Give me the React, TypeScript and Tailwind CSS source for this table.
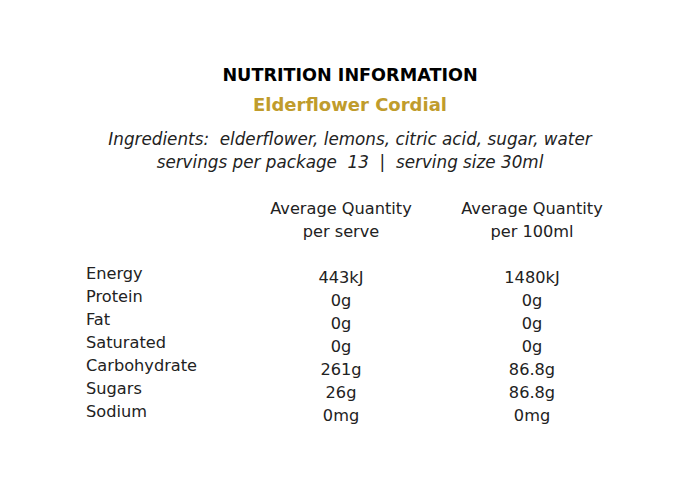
import React from "react";

const rows: [string, string, string][] = [
  ["Energy", "443kJ", "1480kJ"],
  ["Protein", "0g", "0g"],
  ["Fat", "0g", "0g"],
  ["Saturated", "0g", "0g"],
  ["Carbohydrate", "261g", "86.8g"],
  ["Sugars", "26g", "86.8g"],
  ["Sodium", "0mg", "0mg"],
];

export default function App() {
  return (
    <div
      className="w-[700px] h-[500px] bg-white text-[#222] flex flex-col"
      style={{ fontFamily: '"DejaVu Sans", sans-serif' }}
    >
      <div className="pt-[64px] flex flex-col items-center">
        <div className="text-[17.6px] leading-[23px] font-bold text-black">NUTRITION INFORMATION</div>
        <div className="text-[18px] leading-[23px] font-bold text-[#c09c2c] mt-[6px]">Elderflower Cordial</div>
        <div className="mt-[12px] text-[16.8px] leading-[23px] italic text-center">
          <div className="whitespace-pre">Ingredients:  elderflower, lemons, citric acid, sugar, water</div>
          <div className="whitespace-pre">servings per package  13  |  serving size 30ml</div>
        </div>
      </div>
      <div className="mt-[23px] pl-[86px] grid grid-cols-[170px_170px_212px] text-[16.2px] leading-[23px]">
        <div />
        <div className="text-center">
          <div>Average Quantity</div>
          <div>per serve</div>
        </div>
        <div className="text-center">
          <div>Average Quantity</div>
          <div>per 100ml</div>
        </div>
      </div>
      <div className="mt-[19px] pl-[86px] grid grid-cols-[170px_170px_212px] text-[16.2px] leading-[23px]">
        <div>
          {rows.map((r) => (
            <div key={r[0]}>{r[0]}</div>
          ))}
        </div>
        <div className="text-center pt-[4px]">
          {rows.map((r) => (
            <div key={r[0]}>{r[1]}</div>
          ))}
        </div>
        <div className="text-center pt-[4px]">
          {rows.map((r) => (
            <div key={r[0]}>{r[2]}</div>
          ))}
        </div>
      </div>
    </div>
  );
}
